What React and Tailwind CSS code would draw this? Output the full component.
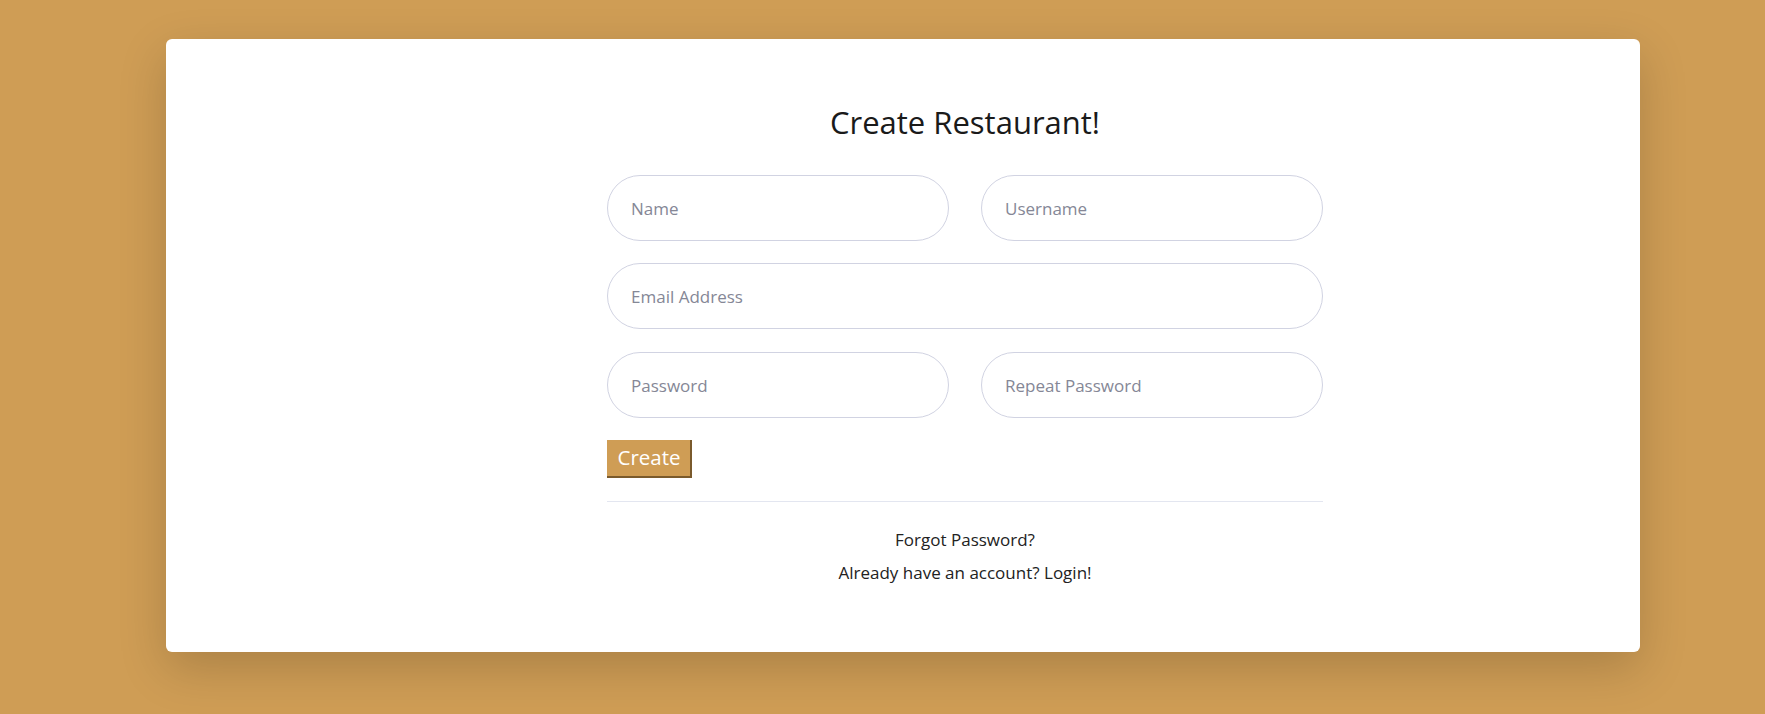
import React from "react";

function Field({ placeholder, type = "text" }) {
  return (
    <input
      type={type}
      placeholder={placeholder}
      className="block w-full h-[66px] rounded-full border border-[#d1d3e2] bg-white pl-[23px] pr-4 text-[17px] text-[#6e707e] placeholder:text-[#858796] outline-none font-['Open_Sans',sans-serif]"
    />
  );
}

export default function App() {
  return (
    <div className="min-h-[714px] w-full bg-[#cf9d55] pt-[39px] pb-[62px] font-['Open_Sans',sans-serif]">
      <div className="ml-[166px] w-[1474px] h-[613px] rounded-[6px] bg-white shadow-[0_1rem_3rem_rgba(0,0,0,0.175)] pl-[441px] pt-[63px]">
        <div className="w-[716px]">
          <h1 className="text-center text-[31px] leading-[40px] h-[40px] text-[#1a1a1a] font-normal">
            Create Restaurant!
          </h1>
          <form className="mt-[33px]" onSubmit={(e) => e.preventDefault()}>
            <div className="grid grid-cols-2 gap-x-[32px]">
              <Field placeholder="Name" />
              <Field placeholder="Username" />
            </div>
            <div className="mt-[22px]">
              <Field placeholder="Email Address" type="email" />
            </div>
            <div className="mt-[23px] grid grid-cols-2 gap-x-[32px]">
              <Field placeholder="Password" type="password" />
              <Field placeholder="Repeat Password" type="password" />
            </div>
            <button
              type="submit"
              className="mt-[22px] flex h-[38px] w-[85px] items-center justify-center bg-[#cf9d55] border-r-2 border-b-2 border-[#7a5a2c] text-[20.5px] leading-none text-white pl-[1px] pb-[1px]"
            >
              Create
            </button>
          </form>
          <div className="mt-[23px] h-px w-full bg-[#e3e6f0]" />
          <div className="mt-[22px] text-center text-[17px] text-[#222] leading-[32.5px]">
            <div className="h-[32.5px]">Forgot Password?</div>
            <div className="h-[32.5px]">Already have an account? Login!</div>
          </div>
        </div>
      </div>
    </div>
  );
}
